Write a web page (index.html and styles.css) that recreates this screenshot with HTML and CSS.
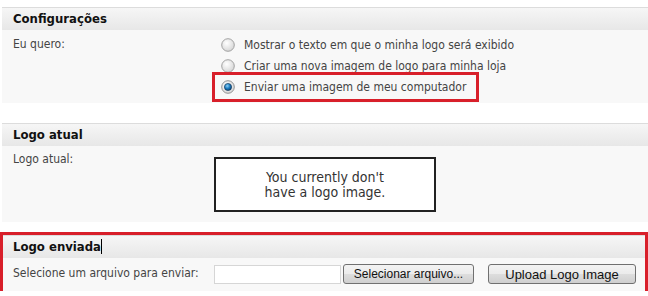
FILE: index.html
```html
<!DOCTYPE html>
<html lang="pt-BR">
<head>
    <meta charset="UTF-8">
    <title>Logo da loja</title>
    <link rel="stylesheet" href="styles.css">
</head>
<body>
    <!-- Configurações -->
    <div class="section first">
        <div class="section-head">Configurações</div>
        <div class="section-body">
            <div class="label">Eu quero:</div>
            <div class="options">
                <label class="option">
                    <svg class="radio" viewBox="0 0 14 14"><use href="#radio-off"/></svg>
                    Mostrar o texto em que o minha logo será exibido
                </label>
                <label class="option">
                    <svg class="radio" viewBox="0 0 14 14"><use href="#radio-off"/></svg>
                    Criar uma nova imagem de logo para minha loja
                </label>
                <label class="option marked">
                    <svg class="radio" viewBox="0 0 14 14"><use href="#radio-on"/></svg>
                    Enviar uma imagem de meu computador
                </label>
            </div>
        </div>
    </div>

    <!-- Logo atual -->
    <div class="section current">
        <div class="section-head">Logo atual</div>
        <div class="section-body">
            <div class="label">Logo atual:</div>
            <div class="logo-box">You currently don't<br>have a logo image.</div>
        </div>
    </div>

    <!-- Logo enviada -->
    <div class="section highlight">
        <div class="section-head">Logo enviada<span class="caret"></span></div>
        <div class="section-body upload">
            <div class="label">Selecione um arquivo para enviar:</div>
            <div class="file-row">
                <span class="file-input"></span>
                <button class="btn btn-file">Selecionar arquivo...</button>
                <button class="btn btn-upload">Upload Logo Image</button>
            </div>
        </div>
    </div>

    <svg width="0" height="0" style="position:absolute">
        <defs>
            <radialGradient id="g-off" cx="40%" cy="35%" r="70%">
                <stop offset="0" stop-color="#ffffff"/>
                <stop offset="1" stop-color="#d4d4d4"/>
            </radialGradient>
            <radialGradient id="g-on" cx="40%" cy="35%" r="70%">
                <stop offset="0" stop-color="#8fd0f5"/>
                <stop offset="0.5" stop-color="#1f7fc2"/>
                <stop offset="1" stop-color="#0c3f6e"/>
            </radialGradient>
            <symbol id="radio-off" viewBox="0 0 14 14">
                <circle cx="7" cy="7" r="6.3" fill="url(#g-off)" stroke="#9a9a9a" stroke-width="0.9"/>
            </symbol>
            <symbol id="radio-on" viewBox="0 0 14 14">
                <circle cx="7" cy="7" r="6.3" fill="url(#g-off)" stroke="#8a8a8a" stroke-width="0.9"/>
                <circle cx="7" cy="7" r="3.6" fill="url(#g-on)" stroke="#0a2f52" stroke-width="0.6"/>
            </symbol>
        </defs>
    </svg>
</body>
</html>
```

FILE: styles.css
```css
body {
    margin: 0;
    background: #fff;
    font-family: "DejaVu Sans Condensed", "DejaVu Sans", sans-serif;
    font-size: 12px;
    color: #444;
}
.section {
    margin-left: 2px;
    margin-top: 20px;
}
.section.first {
    margin-top: 7px;
}
.section-head {
    height: 22px;
    line-height: 22px;
    border-top: 1px solid #dcdcdc;
    background: linear-gradient(#f6f6f6, #e7e7e7);
    padding-left: 11px;
    font-weight: bold;
    font-size: 13px;
    color: #111;
}
.section-body {
    background: #f8f8f8;
    display: grid;
    grid-template-columns: 201px 1fr;
    padding: 4px 0 6px 11px;
}
.label {
    line-height: 21px;
}
.option {
    display: flex;
    align-items: center;
    height: 21px;
    color: #444;
    position: relative;
}
.radio {
    width: 14px;
    height: 14px;
    margin: 0 9px 0 7px;
}
.option.marked::after {
    content: "";
    position: absolute;
    left: -2px;
    top: -4px;
    width: 267px;
    height: 30px;
    border: 3px solid #d81f2a;
    box-sizing: border-box;
}
.current .section-body {
    padding: 5px 0 10px 11px;
}
.current .label {
    line-height: 16px;
}
.logo-box {
    width: 222px;
    height: 55px;
    box-sizing: border-box;
    margin-top: 6px;
    border: 2px solid #222;
    background: #fff;
    display: flex;
    align-items: center;
    justify-content: center;
    text-align: center;
    font-size: 14px;
    line-height: 15px;
    color: #333;
}
.highlight {
    margin: 13px 3px 0 3px;
    outline: 3px solid #d81f2a;
}
.highlight .section-head {
    padding-left: 10px;
}
.caret {
    display: inline-block;
    width: 1px;
    height: 15px;
    background: #000;
    vertical-align: -3px;
}
.upload {
    padding: 6px 0 7px 10px;
}
.upload .label {
    line-height: 19px;
}
.file-row {
    display: flex;
    align-items: center;
}
.file-input {
    width: 127px;
    height: 19px;
    box-sizing: border-box;
    background: #fff;
    border: 1px solid #d6d6d6;
}
.btn {
    height: 20px;
    padding: 0;
    border: 1px solid #707070;
    border-radius: 3px;
    background: linear-gradient(#f3f3f3 0%, #ebebeb 50%, #dddddd 51%, #cfcfcf 100%);
    font-family: "Liberation Sans", Arial, sans-serif;
    font-size: 12px;
    color: #111;
}
.btn-file {
    width: 131px;
    margin-left: 2px;
}
.btn-upload {
    width: 148px;
    margin-left: 14px;
    font-size: 13px;
}
```
